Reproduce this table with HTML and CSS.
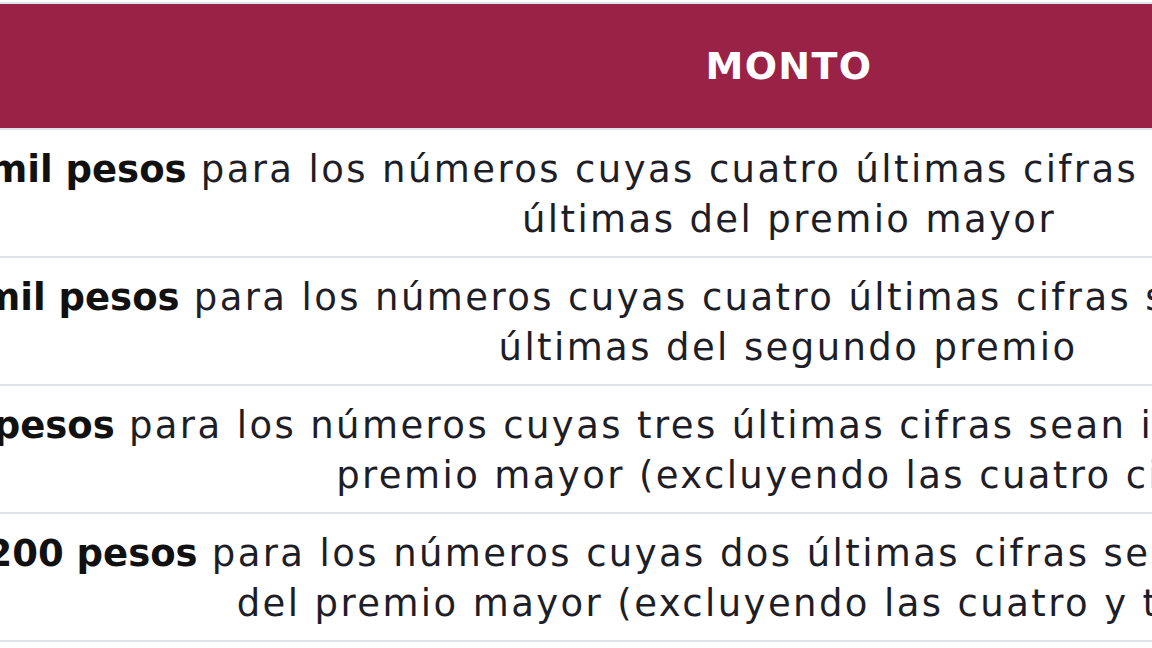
FILE: index.html
```html
<!DOCTYPE html>
<html lang="es">
<head>
<meta charset="utf-8">
<link rel="stylesheet" href="styles.css">
</head>
<body>
<div class="viewport">
  <table class="prizes">
    <thead>
      <tr><th>MONTO</th></tr>
    </thead>
    <tbody>
      <tr><td>
        <span class="line r1"><b>10 mil pesos</b> para los números cuyas cuatro últimas cifras sean iguales a las cuatro</span>
        <span class="line">últimas del premio mayor</span>
      </td></tr>
      <tr><td>
        <span class="line r2"><b>10 mil pesos</b> para los números cuyas cuatro últimas cifras sean iguales a las cuatro</span>
        <span class="line r2b">últimas del segundo premio</span>
      </td></tr>
      <tr><td>
        <span class="line r3"><b>500 pesos</b> para los números cuyas tres últimas cifras sean iguales a las tres últimas del</span>
        <span class="line r3b">premio mayor (excluyendo las cuatro cifras)</span>
      </td></tr>
      <tr><td>
        <span class="line r4"><b>200 pesos</b> para los números cuyas dos últimas cifras sean iguales a las dos últimas</span>
        <span class="line r4b">del premio mayor (excluyendo las cuatro y tres cifras)</span>
      </td></tr>
    </tbody>
  </table>
</div>
</body>
</html>
```

FILE: styles.css
```css
html, body {
  margin: 0;
  padding: 0;
  background: #ffffff;
  overflow: hidden;
}
.viewport {
  width: 1152px;
  height: 648px;
  overflow: hidden;
  padding-top: 2px;
}
.prizes {
  border-collapse: collapse;
  width: 2400px;
  margin-left: -411px;
  font-family: "DejaVu Sans", "Open Sans", sans-serif;
  color: #1e1e28;
}
.prizes th {
  background: #9b2247;
  color: #ffffff;
  font-size: 38px;
  letter-spacing: 1.4px;
  font-weight: 700;
  height: 124px;
  padding: 0;
  text-align: center;
  vertical-align: middle;
  border-top: 2px solid #dfe4ea;
  border-bottom: 2px solid #dfe4ea;
}
.prizes td {
  font-size: 37px;
  letter-spacing: 2.4px;
  line-height: 50px;
  height: 122px;
  padding: 4px 0 0 0;
  text-align: center;
  white-space: nowrap;
  border-bottom: 2px solid #dfe4ea;
}
.prizes td b {
  font-weight: 700;
  letter-spacing: 0;
  color: #111111;
}
.line {
  display: block;
}
.r1 { padding-left: 19px; }
.r2 { padding-left: 5px; }
.r2b { padding-right: 2px; }
.r3 { padding-left: 68px; }
.r3b { padding-left: 16px; }
.r4 { padding-left: 140px; }
.r4b { padding-left: 28px; }
```
